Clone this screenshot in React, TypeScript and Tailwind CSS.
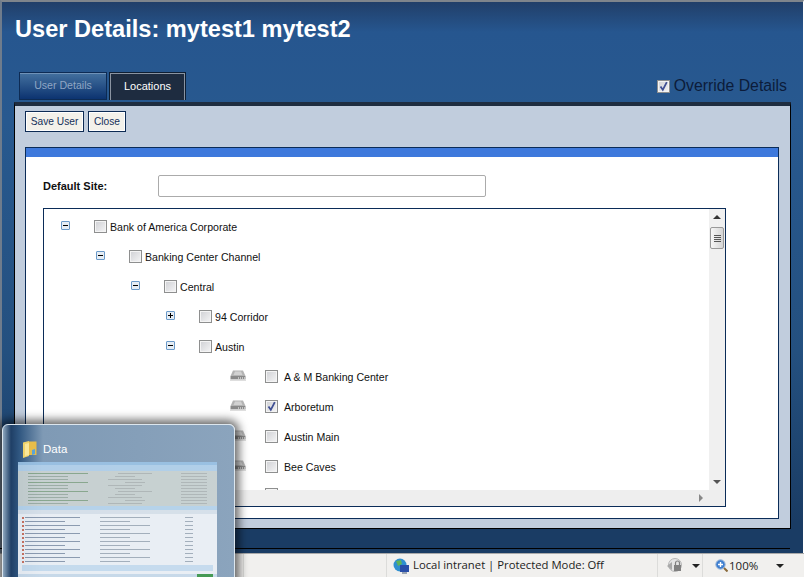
import React from "react";

const font = "font-['Liberation_Sans',Arial,sans-serif]";

function Box({ checked = false }: { checked?: boolean }) {
  return (
    <span className="relative block h-[13px] w-[13px] shrink-0 border border-[#8e8f8f] bg-gradient-to-br from-[#cfd0d4] to-[#f5f5f6] shadow-[inset_0_0_0_1px_#f4f4f4]">
      {checked && (
        <svg viewBox="0 0 11 11" className="absolute left-0 top-0 h-[11px] w-[11px]">
          <path d="M2.5 5.5 L4.8 8.8 L8.8 1.2" fill="none" stroke="#3f4f93" strokeWidth="1.8" />
        </svg>
      )}
    </span>
  );
}

function Expander({ open }: { open: boolean }) {
  return (
    <span className="relative block h-[9px] w-[9px] shrink-0 rounded-[1px] border border-[#6b9ac9] bg-[#e6edf4]">
      <span className="absolute left-[1px] top-[3px] h-px w-[5px] bg-black" />
      {!open && <span className="absolute left-[3px] top-[1px] h-[5px] w-px bg-black" />}
    </span>
  );
}

function Server() {
  return (
    <svg viewBox="0 0 16 11" className="h-[11px] w-[16px] shrink-0">
      <path d="M3 0.5 H13 L15.5 6 H0.5 Z" fill="#b4b4b4" />
      <path d="M5 1.5 H11 L12.5 5 H3.5 Z" fill="#d2d2d2" />
      <rect x="0.5" y="6" width="15" height="3.5" fill="#8a8a8a" />
      <path d="M8 8 h1 M10 8 h1 M12 8 h1 M14 8 h1" stroke="#fff" strokeWidth="1" />
      <rect x="0" y="9.5" width="16" height="1.5" fill="#dedede" />
    </svg>
  );
}

const branches = [
  { label: "Bank of America Corporate", exp: "ml-[17px]", open: true },
  { label: "Banking Center Channel", exp: "ml-[52px]", open: true },
  { label: "Central", exp: "ml-[87px]", open: true },
  { label: "94 Corridor", exp: "ml-[122px]", open: false },
  { label: "Austin", exp: "ml-[122px]", open: true },
];

const leaves = [
  { label: "A & M Banking Center", checked: false },
  { label: "Arboretum", checked: true },
  { label: "Austin Main", checked: false },
  { label: "Bee Caves", checked: false },
];

function Tree() {
  return (
    <div className="flex h-[299px] w-[683px] flex-col border border-[#0b2c58] bg-white">
      <div className="flex min-h-0 flex-1">
        <div className="min-w-0 flex-1 overflow-hidden pt-[2px] text-[10.6px] text-[#111]">
          {branches.map((b) => (
            <div key={b.label} className="flex h-[30px] items-center">
              <span className={`${b.exp} -translate-y-px`}><Expander open={b.open} /></span>
              <span className="ml-[24px]"><Box /></span>
              <span className="ml-[3px] translate-y-[2px] whitespace-nowrap">{b.label}</span>
            </div>
          ))}
          {leaves.map((l) => (
            <div key={l.label} className="flex h-[30px] items-center">
              <span className="ml-[186px] -translate-y-px"><Server /></span>
              <span className="ml-[19px]"><Box checked={l.checked} /></span>
              <span className="ml-[6px] translate-y-[2px] whitespace-nowrap">{l.label}</span>
            </div>
          ))}
          <div className="ml-[221px] mt-[7px]"><Box /></div>
        </div>
        <div className="flex w-[16px] shrink-0 flex-col items-center bg-[#f0f0f0]">
          <span className="mt-[6px] h-0 w-0 border-x-[4px] border-b-[4px] border-x-transparent border-b-[#333]" />
          <span className="mt-[8px] flex h-[22px] w-[14px] flex-col items-center justify-center gap-px rounded-[2px] border border-[#999] bg-gradient-to-r from-[#f6f6f6] to-[#d5d5d5]">
            <span className="h-px w-[7px] bg-[#555]" />
            <span className="h-px w-[7px] bg-[#555]" />
            <span className="h-px w-[7px] bg-[#555]" />
            <span className="h-px w-[7px] bg-[#555]" />
          </span>
          <span className="flex-1" />
          <span className="mb-[6px] h-0 w-0 border-x-[4px] border-t-[4px] border-x-transparent border-t-[#555]" />
        </div>
      </div>
      <div className="flex h-[16px] shrink-0 items-center justify-end bg-[#eeeeee] pr-[22px]">
        <span className="h-0 w-0 border-y-[4px] border-l-[4px] border-y-transparent border-l-[#888]" />
      </div>
    </div>
  );
}

const miniRows = Array.from({ length: 12 }, (_, i) => i);
const miniTop = Array.from({ length: 11 }, (_, i) => i);

function Thumbnail() {
  return (
    <div className="absolute bottom-[-6px] left-[2px] flex h-[159px] w-[233px] flex-col overflow-hidden rounded-t-[6px] border border-[#dce6ee] bg-[linear-gradient(to_right,#8fa8bf_0px,#1f3f66_8px,#2f5680_16px,#7f9ab5_40px,#8ba4bd_100%)] shadow-[0_0_10px_4px_rgba(0,0,0,0.6)]">
      <div className="flex h-[37px] items-center pl-[20px] pt-[12px]">
        <svg viewBox="0 0 14 17" className="h-[17px] w-[14px]">
          <path d="M0 1.5 L6 0 V15 L0 17 Z" fill="#f0d36a" />
          <path d="M6 0.5 H13.5 V14 H6 Z" fill="#e7bd4a" />
          <path d="M2 3 L6 2 V14 L2 15 Z" fill="#f9e79a" />
          <path d="M9 9 L12 8 V13 L9 14 Z" fill="#5aa4d8" />
        </svg>
        <span className={`${font} ml-[6px] text-[11.5px] text-white`}>Data</span>
      </div>
      <div className="ml-[15px] flex h-[115px] w-[199px] flex-col bg-[#e9eff6] opacity-90 blur-[0.7px]">
        <div className="h-[5px] bg-[#9cc4e6]" />
        <div className="h-[8px] bg-[#b6d4ee]" />
        <div className="flex h-[38px] flex-col gap-[2px] bg-[#cfd6d4] px-[10px] py-[2px]">
          {miniTop.map((i) => (
            <div key={i} className="flex h-px justify-between">
              <span className={i % 3 === 0 ? "w-[60px] bg-[#8aa98b]" : "w-[40px] bg-[#9fb0a5]"} />
              <span className={i % 2 === 0 ? "w-[34px] bg-[#b4bab8]" : "w-[20px] bg-[#b4bab8]"} />
              <span className="w-[26px] bg-[#b4bab8]" />
            </div>
          ))}
        </div>
        <div className="h-[6px] bg-[#bcd9f0]" />
        <div className="h-[6px] bg-[#dfe7ef]" />
        <div className="flex flex-1 flex-col gap-[2px] bg-[#f4f7fb] px-[4px] py-[3px]">
          {miniRows.map((i) => (
            <div key={i} className="flex h-[2px] items-center">
              <span className="h-[2px] w-[2px] bg-[#d0715c]" />
              <span className={i % 2 === 0 ? "ml-[1px] h-px w-[55px] bg-[#8d9bb0]" : "ml-[1px] h-px w-[40px] bg-[#8d9bb0]"} />
              <span className={i % 2 === 0 ? "ml-[20px] h-px w-[50px] bg-[#a7b1bd]" : "ml-[35px] h-px w-[30px] bg-[#a7b1bd]"} />
              <span className={i % 2 === 0 ? "ml-[35px] h-px w-[8px] bg-[#a7b1bd]" : "ml-[55px] h-px w-[8px] bg-[#a7b1bd]"} />
            </div>
          ))}
          <div className="mt-auto h-[6px] bg-[#cde2f4]" />
        </div>
        <div className="flex h-[5px] justify-end bg-[#cfe0ef] pr-[4px]">
          <span className="w-[16px] bg-[#3f9a4a]" />
        </div>
      </div>
    </div>
  );
}

function StatusBar() {
  return (
    <div className="flex h-[24px] shrink-0 items-center border-t border-[#a9a9a9] bg-[#f1f0ee] font-['Open_Sans',sans-serif] text-[11.5px] text-[#1c1c1c]">
      <div className="h-full w-[244px] border-r border-[#dcdcda]" />
      <div className="h-full w-[143px] border-r border-[#dcdcda]" />
      <div className="flex h-full w-[271px] items-center border-r border-[#dcdcda] pl-[6px]">
        <svg viewBox="0 0 16 16" className="h-[16px] w-[16px] shrink-0">
          <circle cx="7" cy="7" r="6.5" fill="#2f8fd0" />
          <path d="M3 3 L8 2 L9 6 L5 8 Z" fill="#5fb35a" />
          <rect x="7" y="7" width="9" height="7" fill="#2a4fa8" />
          <rect x="9" y="14" width="5" height="2" fill="#9aa5b3" />
        </svg>
        <span className="ml-[4px] whitespace-nowrap text-[11.3px]">Local intranet | Protected Mode: Off</span>
      </div>
      <div className="flex h-full w-[45px] items-center border-r border-[#dcdcda] pl-[9px]">
        <svg viewBox="0 0 16 16" className="h-[16px] w-[16px]">
          <circle cx="8" cy="7" r="6.5" fill="#e4e4e4" stroke="#b5b5b5" />
          <path d="M0 8 L5 4 V12 Z" fill="#a8a8a8" />
          <rect x="7" y="7" width="7" height="6" fill="#808080" />
          <path d="M8.5 7 V5 a2 2 0 0 1 4 0 V7" fill="none" stroke="#808080" strokeWidth="1.2" />
        </svg>
        <span className="ml-[9px] h-0 w-0 border-x-[4px] border-t-[4px] border-x-transparent border-t-[#222]" />
      </div>
      <div className="flex h-full flex-1 items-center pl-[12px]">
        <svg viewBox="0 0 13 13" className="h-[13px] w-[13px] shrink-0">
          <circle cx="5.5" cy="5.5" r="4.7" fill="#3f7fd0" stroke="#9db7d8" />
          <path d="M3 5.5 H8 M5.5 3 V8" stroke="#fff" strokeWidth="1.4" />
          <path d="M9 9 L12.5 12.5" stroke="#8a6a3a" strokeWidth="2" />
        </svg>
        <span className="ml-px whitespace-nowrap">100%</span>
        <span className="ml-[18px] h-0 w-0 border-x-[4px] border-t-[4px] border-x-transparent border-t-[#222]" />
      </div>
    </div>
  );
}

export default function App() {
  return (
    <div className={`${font} relative flex h-[577px] w-[804px] flex-col overflow-hidden`}>
      <div className="flex min-h-0 flex-1 flex-col border-l-2 border-r border-t-2 border-l-[#6f7c8c] border-r-white border-t-[#7f858c] bg-[linear-gradient(to_bottom,#213f69_0px,#26568f_30px,#28598f_120px,#24507f_350px,#1a3c64_520px)]">
        <h1 className="ml-[13px] mt-[12px] h-[30px] text-[23.6px] font-bold leading-[30px] text-white">User Details: mytest1 mytest2</h1>
        <div className="ml-[17px] mt-[28px] flex h-[28px] items-start">
          <div className="flex h-[28px] w-[88px] items-center justify-center border border-[#0d2b54] bg-gradient-to-b from-[#44719f] to-[#0c3370] text-[10.6px] text-[#8fa6c4] shadow-[inset_0_1px_0_#6f92b8]">User Details</div>
          <div className="ml-[2px] flex h-[28px] w-[77px] items-center justify-center border border-b-0 border-[#0d1e33] bg-[#1e2c40] text-[11px] text-white shadow-[inset_0_1px_0_#8a94a2,inset_1px_0_0_#8a94a2,inset_-1px_0_0_#8a94a2]">Locations</div>
          <div className="mr-[16px] ml-auto mt-[5px] flex items-center">
            <span className="mr-[3px] block h-[13px] w-[13px]"><Box checked /></span>
            <span className="ml-[1px] text-[15.8px] leading-[18px] text-[#0c1c3a]">Override Details</span>
          </div>
        </div>
        <div className="ml-[12px] mt-[2px] flex h-[427px] w-[777px] flex-col border-x border-b border-t-[4px] border-x-black border-b-black border-t-[#1f2d40] bg-[#c1cddd] pl-[10px]">
          <div className="mt-[5px] flex gap-[4px]">
            <button className="h-[21px] w-[59px] border border-[#0d2b54] bg-[#f3f1ea] text-[10.2px] text-[#14305a] shadow-[inset_0_0_0_1px_#fff]">Save User</button>
            <button className="h-[21px] w-[38px] border border-[#0d2b54] bg-[#f3f1ea] text-[10.2px] text-[#14305a] shadow-[inset_0_0_0_1px_#fff]">Close</button>
          </div>
          <div className="mt-[15px] flex h-[372px] w-[754px] flex-col border border-[#0b2c58] bg-white">
            <div className="h-[9px] shrink-0 bg-[#3e79dc]" />
            <div className="mt-[18px] flex h-[22px] items-center pl-[17px]">
              <span className="w-[115px] text-[11px] font-bold text-[#111]">Default Site:</span>
              <input aria-label="Default Site" className="h-[22px] w-[328px] rounded-[2px] border border-[#ababab] bg-white" />
            </div>
            <div className="ml-[17px] mt-[11px]"><Tree /></div>
          </div>
        </div>
        <div className="ml-[-2px] mt-[19px] h-px w-[790px] bg-black" />
      </div>
      <StatusBar />
      <Thumbnail />
    </div>
  );
}
